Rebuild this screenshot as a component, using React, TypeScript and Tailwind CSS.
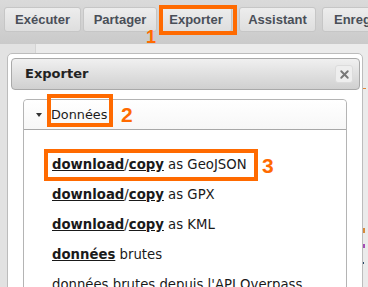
import { X } from "lucide-react";

const barFont = { fontFamily: "'Liberation Sans', Arial, sans-serif" };
const dlgFont = { fontFamily: "'DejaVu Sans', Verdana, sans-serif" };

function ToolButton({ label, className }: { label: string; className: string }) {
  return (
    <div
      className={`h-[25px] shrink-0 flex items-center justify-center rounded-[3px] border border-[#c6c6c6] bg-gradient-to-b from-[#ededed] to-[#dedede] text-[13px] font-bold text-[#4a4f58] ${className}`}
    >
      {label}
    </div>
  );
}

function ExportRow({ fmt }: { fmt: string }) {
  return (
    <div className="h-[30px] leading-[30px] whitespace-nowrap">
      <span className="font-bold underline">download</span>/
      <span className="font-bold underline">copy</span> as {fmt}
    </div>
  );
}

export default function App() {
  return (
    <div className="relative w-[368px] h-[287px] overflow-hidden flex flex-col bg-[#ebebeb]">
      {/* barre d'outils */}
      <div
        className="h-[44px] shrink-0 flex items-start pt-[7px] pl-[4px] bg-gradient-to-b from-[#dadada] to-[#cacaca]"
        style={barFont}
      >
        <ToolButton label="Exécuter" className="w-[77px]" />
        <ToolButton label="Partager" className="w-[74px] ml-[2px]" />
        <ToolButton label="Exporter" className="w-[72px] ml-[3px]" />
        <ToolButton label="Assistant" className="w-[77px] ml-[7px]" />
        <ToolButton label="Enregistrer" className="w-[90px] ml-[6px] justify-start pl-[11px]" />
      </div>

      {/* éditeur derrière la modale */}
      <div className="flex flex-1">
        <div className="w-[36px] bg-[#e2e2e2] border-r border-[#d4d4d4]" />
        <div className="flex-1 flex flex-col items-start pl-[327px]">
          <div className="mt-[44px] h-[1px] w-[3px] bg-[#e0883a]" />
          <div className="mt-[139px] h-[5px] w-[2px] bg-[#d68a3c]" />
          <div className="mt-[11px] h-[4px] w-[2px] bg-[#a44fb6]" />
          <div className="mt-[14px] h-[2px] w-[1px] bg-[#2a4a6a]" />
        </div>
      </div>

      {/* modale Exporter */}
      <div
        className="absolute left-[7px] top-[53px] w-[356px] h-[250px] rounded-[5px] border border-[#bcbcbc] bg-white pt-[4px] pl-[3px] pr-[2px] text-[#1a1a1a]"
        style={dlgFont}
      >
        <div className="h-[32px] flex items-center justify-between rounded-[4px] border border-[#a9a9a9] bg-gradient-to-b from-[#f0f0f0] to-[#d0d0d0] pl-[13px] pr-[6px]">
          <span className="text-[13px] font-bold text-[#222]">Exporter</span>
          <div className="w-[18px] h-[18px] flex items-center justify-center rounded-[3px] border border-[#dcdcdc] bg-[#eeeeee]">
            <X className="w-[13px] h-[13px] text-[#777]" strokeWidth={3.5} />
          </div>
        </div>

        <div className="mt-[9px] ml-[12px] mr-[13px] h-[200px] rounded-t-[4px] border border-[#b4b4b4] text-[13.25px]">
          <div className="h-[30px] flex items-center pl-[12px] border-b border-[#a8a8a8] bg-gradient-to-b from-white to-[#f7f7f7] rounded-t-[4px]">
            <span className="w-0 h-0 border-l-[3px] border-r-[3px] border-t-[4px] border-l-transparent border-r-transparent border-t-[#333]" />
            <span className="ml-[9px] text-[12.8px]">Données</span>
          </div>
          <div className="pt-[20px] pl-[28px]">
            <ExportRow fmt="GeoJSON" />
            <ExportRow fmt="GPX" />
            <ExportRow fmt="KML" />
            <div className="h-[30px] leading-[30px] whitespace-nowrap">
              <span className="font-bold underline">données</span> brutes
            </div>
            <div className="h-[30px] leading-[30px] whitespace-nowrap">données brutes depuis l'API Overpass</div>
          </div>
        </div>
      </div>

      {/* annotations */}
      <div className="absolute left-[159px] top-[5px] w-[78px] h-[30px] border-[4px] border-[#ff6a00]" />
      <span
        className="absolute left-[146px] top-[28px] text-[18px] leading-none font-bold text-[#ff6a00]"
        style={barFont}
      >
        1
      </span>
      <div className="absolute left-[47px] top-[94px] w-[66px] h-[33px] border-[4px] border-[#ff6a00]" />
      <span
        className="absolute left-[121px] top-[104px] text-[21px] leading-none font-bold text-[#ff6a00]"
        style={barFont}
      >
        2
      </span>
      <div className="absolute left-[44px] top-[149px] w-[214px] h-[32px] border-[4px] border-[#ff6a00]" />
      <span
        className="absolute left-[262px] top-[155px] text-[21px] leading-none font-bold text-[#ff6a00]"
        style={barFont}
      >
        3
      </span>
    </div>
  );
}
